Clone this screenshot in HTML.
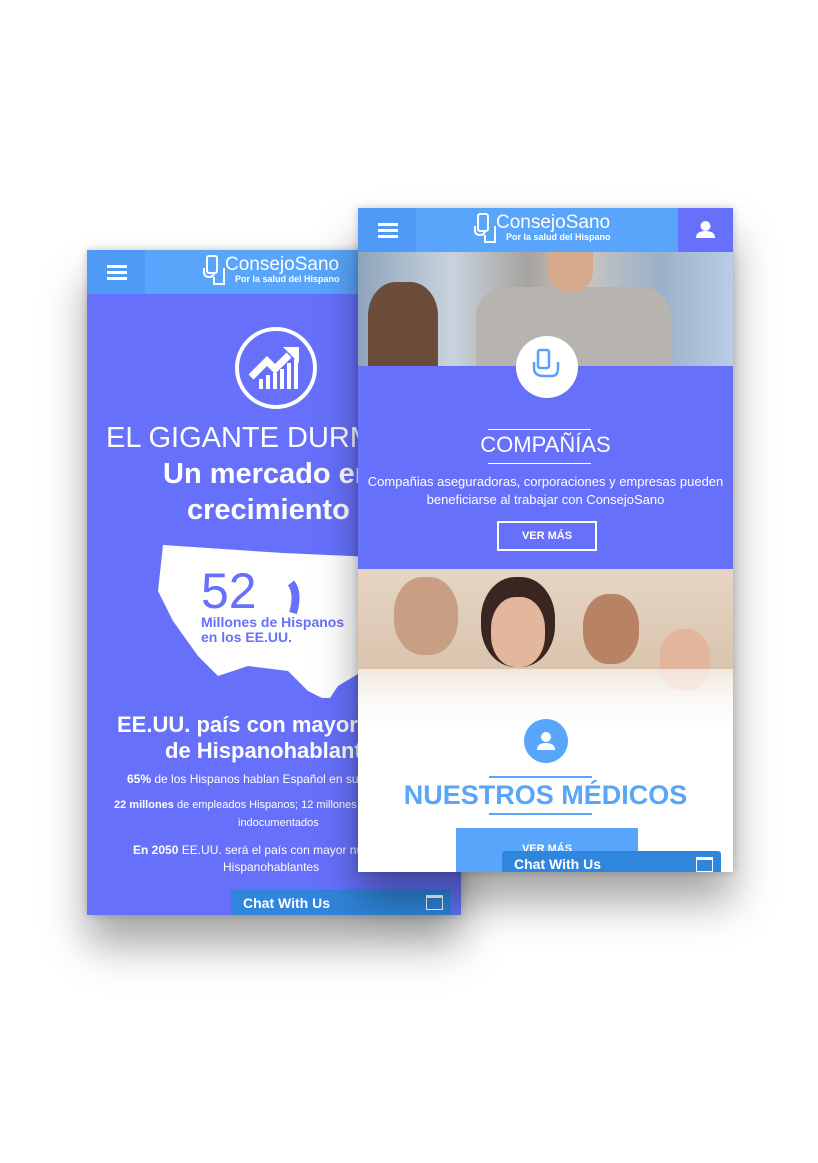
<!DOCTYPE html>
<html><head><meta charset="utf-8"><style>
*{margin:0;padding:0;box-sizing:border-box}
body{width:818px;height:1163px;background:#fff;position:relative;overflow:hidden;font-family:"Liberation Sans",sans-serif;color:#fff}
.ph{position:absolute;overflow:hidden;box-shadow:0 30px 40px rgba(0,0,0,.35),0 0 8px rgba(0,0,0,.2)}
.hdr{position:absolute;left:0;top:0;right:0;height:44px;background:#58a5fb}
.menu{position:absolute;left:0;top:0;width:58px;height:44px;background:#4f9af5}
.menu i{position:absolute;left:20px;width:20px;height:3px;background:#fff}
.logo{position:absolute;top:4px;font-size:19px;color:#fff;padding-left:24px}
.logo svg{position:absolute;left:0;top:0}
.logo small{display:block;font-size:9px;font-weight:bold;margin-left:10px;margin-top:-2px}
.c{text-align:center;position:absolute;left:0;right:0}
.chat{position:absolute;height:26px;background:#2f86dc;color:#fff;font-size:14px;font-weight:bold;padding:6px 12px;border-radius:3px 3px 0 0}
.chat b{position:absolute;right:8px;top:6px;width:17px;height:15px;border:1.5px solid #fff;border-top-width:3px}
</style></head><body>

<div class="ph" style="left:87px;top:250px;width:374px;height:665px;background:#6670fb">
 <div class="hdr"><div class="menu"><i style="top:15px"></i><i style="top:21px"></i><i style="top:27px"></i></div>
  <div class="logo" style="left:114px"><svg width="26" height="34"><rect x="6" y="2" width="10" height="17" rx="2" stroke="#fff" stroke-width="2" fill="none"/><path d="M3 14v4q0 5 5 5t5-5M13 23v7h10v-16" stroke="#fff" stroke-width="2" fill="none"/></svg>ConsejoSano<small>Por la salud del Hispano</small></div></div>
 <div style="position:absolute;left:148px;top:77px;width:82px;height:82px;border:4px solid #fff;border-radius:50%">
  <svg width="74" height="74" viewBox="0 0 74 74"><path d="M12 46l16-16 8 8 14-14" stroke="#fff" stroke-width="7" fill="none"/><path d="M44 16h16v16z" fill="#fff"/><g fill="#fff"><rect x="20" y="48" width="4" height="10"/><rect x="27" y="44" width="4" height="14"/><rect x="34" y="42" width="4" height="16"/><rect x="41" y="38" width="4" height="20"/><rect x="48" y="32" width="4" height="26"/><rect x="55" y="28" width="4" height="30"/></g></svg></div>
 <div style="position:absolute;left:19px;top:172px;font-size:29px;white-space:nowrap">EL GIGANTE DURMIENTE</div>
 <div style="position:absolute;left:76px;top:208px;font-size:29px;font-weight:bold;white-space:nowrap">Un mercado en</div>
 <div style="position:absolute;left:100px;top:244px;font-size:29px;font-weight:bold;white-space:nowrap">crecimiento</div>
 <svg style="position:absolute;left:64px;top:293px" width="320" height="155" viewBox="0 0 320 155"><path d="M12 2l120 8 90 4 20 10 40-4 30 18 10 30-20 20-20 30-25 10-15-5-30 5-25 15-10 15-20-10-20-20-40-5-30 10-20-20-25-35-15-30z" fill="#fff"/><path d="M140 40q8 10 2 30" stroke="#6670fb" stroke-width="8" fill="none"/></svg>
 <div style="position:absolute;left:114px;top:312px;font-size:50px;color:#6670fb">52</div>
 <div style="position:absolute;left:114px;top:365px;font-size:14px;font-weight:bold;color:#6670fb;line-height:15px;white-space:nowrap">Millones de Hispanos<br>en los EE.UU.</div>
 <div style="position:absolute;left:30px;top:462px;font-size:22px;font-weight:bold;white-space:nowrap">EE.UU. país con mayor número</div>
 <div style="position:absolute;left:78px;top:488px;font-size:22px;font-weight:bold;white-space:nowrap">de Hispanohablantes</div>
 <div style="position:absolute;left:40px;top:522px;font-size:12px;white-space:nowrap"><b>65%</b> de los Hispanos hablan Español en su casa</div>
 <div style="position:absolute;left:27px;top:549px;font-size:11px;white-space:nowrap"><b>22 millones</b> de empleados Hispanos; 12 millones</div>
 <div style="position:absolute;left:151px;top:567px;font-size:11px">indocumentados</div>
 <div style="position:absolute;left:46px;top:593px;font-size:12px;white-space:nowrap"><b>En 2050</b> EE.UU. será el país con mayor número de</div>
 <div style="position:absolute;left:136px;top:610px;font-size:12px">Hispanohablantes</div>
 <div class="chat" style="left:144px;top:639px;width:220px">Chat With Us<b></b></div>
</div>

<div class="ph" style="left:358px;top:208px;width:375px;height:664px;background:#fff">
 <div class="hdr"><div class="menu"><i style="top:15px"></i><i style="top:21px"></i><i style="top:27px"></i></div>
  <div class="logo" style="left:114px"><svg width="26" height="34"><rect x="6" y="2" width="10" height="17" rx="2" stroke="#fff" stroke-width="2" fill="none"/><path d="M3 14v4q0 5 5 5t5-5M13 23v7h10v-16" stroke="#fff" stroke-width="2" fill="none"/></svg>ConsejoSano<small>Por la salud del Hispano</small></div>
  <div style="position:absolute;right:0;top:0;width:55px;height:44px;background:#6670fb"><svg width="55" height="44"><circle cx="27.5" cy="18" r="5" fill="#fff"/><path d="M18 30q0-7 9.5-7t9.5 7z" fill="#fff"/></svg></div></div>
 <div style="position:absolute;left:0;top:44px;width:375px;height:114px;background:linear-gradient(90deg,#8ea4bb 0%,#c9d3dd 25%,#a6a3a0 45%,#cbc6c0 60%,#9ab0c9 80%,#b9cde6 100%)">
  <div style="position:absolute;left:10px;top:30px;width:70px;height:84px;border-radius:40% 40% 0 0;background:#6b4c3a"></div>
  <div style="position:absolute;left:118px;top:35px;width:195px;height:79px;background:#b7b3ae;border-radius:30px 30px 0 0"></div>
  <div style="position:absolute;left:190px;top:0;width:45px;height:40px;background:#d6a98c;border-radius:0 0 20px 20px"></div>
 </div>
 <div style="position:absolute;left:0;top:158px;width:375px;height:203px;background:#6670fb"></div>
 <div style="position:absolute;left:158px;top:128px;width:62px;height:62px;background:#fff;border-radius:50%"><svg width="62" height="62"><rect x="22" y="14" width="11" height="18" rx="2" stroke="#5aa0f5" stroke-width="2.5" fill="none"/><path d="M18 26v6q0 8 10 8h8q6 0 6-8v-6" stroke="#5aa0f5" stroke-width="2.5" fill="none"/></svg></div>
 <div style="position:absolute;left:130px;top:221px;width:103px;height:1px;background:#fff"></div>
 <div class="c" style="top:224px;font-size:22px">COMPAÑÍAS</div>
 <div style="position:absolute;left:130px;top:255px;width:103px;height:1px;background:#fff"></div>
 <div class="c" style="top:265px;font-size:13px;line-height:18px">Compañias aseguradoras, corporaciones y empresas pueden<br>beneficiarse al trabajar con ConsejoSano</div>
 <div style="position:absolute;left:139px;top:313px;width:100px;height:30px;border:2px solid #fff;font-size:11px;font-weight:bold;text-align:center;line-height:26px">VER MÁS</div>
 <div style="position:absolute;left:0;top:361px;width:375px;height:170px;background:linear-gradient(180deg,#e6d5c4 0%,#d9c4ad 60%,#fff 100%)">
  <div style="position:absolute;left:36px;top:8px;width:64px;height:78px;background:#c99f84;border-radius:45%"></div>
  <div style="position:absolute;left:133px;top:28px;width:54px;height:70px;background:#e3b79e;border-radius:45%;box-shadow:0 -10px 0 10px #3a2520"></div>
  <div style="position:absolute;left:225px;top:25px;width:56px;height:70px;background:#b88264;border-radius:45%"></div>
  <div style="position:absolute;left:302px;top:60px;width:50px;height:62px;background:#e2b59c;border-radius:45%"></div>
  <div style="position:absolute;left:0;top:100px;width:375px;height:70px;background:linear-gradient(180deg,rgba(255,255,255,.6),#fff)"></div>
 </div>
 <div style="position:absolute;left:166px;top:511px;width:44px;height:44px;background:#58a5fb;border-radius:50%"><svg width="44" height="44"><circle cx="22" cy="18" r="5" fill="#fff"/><path d="M13 31q0-7 9-7t9 7z" fill="#fff"/></svg></div>
 <div style="position:absolute;left:131px;top:568px;width:103px;height:2px;background:#58a5fb"></div>
 <div class="c" style="top:572px;font-size:27px;font-weight:bold;color:#58a5fb">NUESTROS MÉDICOS</div>
 <div style="position:absolute;left:131px;top:605px;width:103px;height:2px;background:#58a5fb"></div>
 <div style="position:absolute;left:98px;top:620px;width:182px;height:44px;background:#58a5fb;font-size:11px;font-weight:bold;text-align:center;padding-top:15px">VER MÁS</div>
 <div class="chat" style="left:144px;top:643px;width:219px;height:21px;padding-top:5px">Chat With Us<b></b></div>
</div>
</body></html>
